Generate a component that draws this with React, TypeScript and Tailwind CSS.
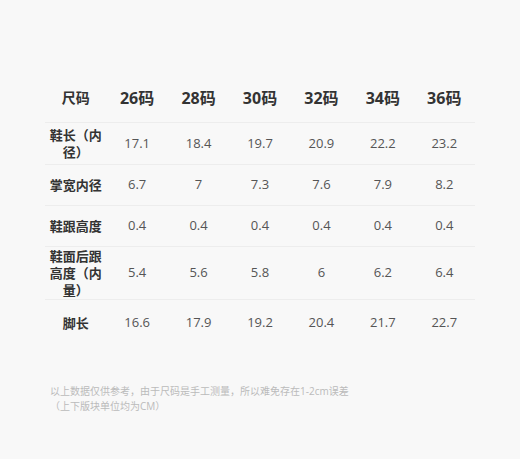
const sizes = ['26码', '28码', '30码', '32码', '34码', '36码']

const rows = [
  { label: '鞋长（内径）', h: 'h-[42px]', values: ['17.1', '18.4', '19.7', '20.9', '22.2', '23.2'] },
  { label: '掌宽内径', h: 'h-[41px]', values: ['6.7', '7', '7.3', '7.6', '7.9', '8.2'] },
  { label: '鞋跟高度', h: 'h-[41px]', values: ['0.4', '0.4', '0.4', '0.4', '0.4', '0.4'] },
  { label: '鞋面后跟高度（内量）', h: 'h-[53px]', values: ['5.4', '5.6', '5.8', '6', '6.2', '6.4'] },
  { label: '脚长', h: 'h-[46px]', values: ['16.6', '17.9', '19.2', '20.4', '21.7', '22.7'] },
]

export default function App() {
  return (
    <div className="h-[459px] w-[520px] bg-[#f8f8f8] pt-[73px] font-['Open_Sans','Noto_Sans_CJK_SC',sans-serif]">
      <div className="ml-[45px] w-[430px]">
        <div className="grid h-[50px] grid-cols-7 items-center border-b border-[#ededed] text-center">
          <div className="text-[14px] font-bold text-[#333]">尺码</div>
          {sizes.map((s) => (
            <div key={s} className="text-[16px] font-bold text-[#333]">
              {s}
            </div>
          ))}
        </div>
        {rows.map((r, i) => (
          <div
            key={r.label}
            className={`grid grid-cols-7 items-center text-center ${r.h} ${
              i < rows.length - 1 ? 'border-b border-[#ededed]' : ''
            }`}
          >
            <div className="px-[3px] text-[13px] font-bold leading-[17px] text-[#333]">
              {r.label}
            </div>
            {r.values.map((v, j) => (
              <div key={j} className="text-[13px] text-[#555]">
                {v}
              </div>
            ))}
          </div>
        ))}
      </div>
      <div className="ml-[50px] mt-[38px] text-[10px] leading-[15px] text-[#bbb]">
        <p>以上数据仅供参考，由于尺码是手工测量，所以难免存在1-2cm误差</p>
        <p>（上下版块单位均为CM）</p>
      </div>
    </div>
  )
}
